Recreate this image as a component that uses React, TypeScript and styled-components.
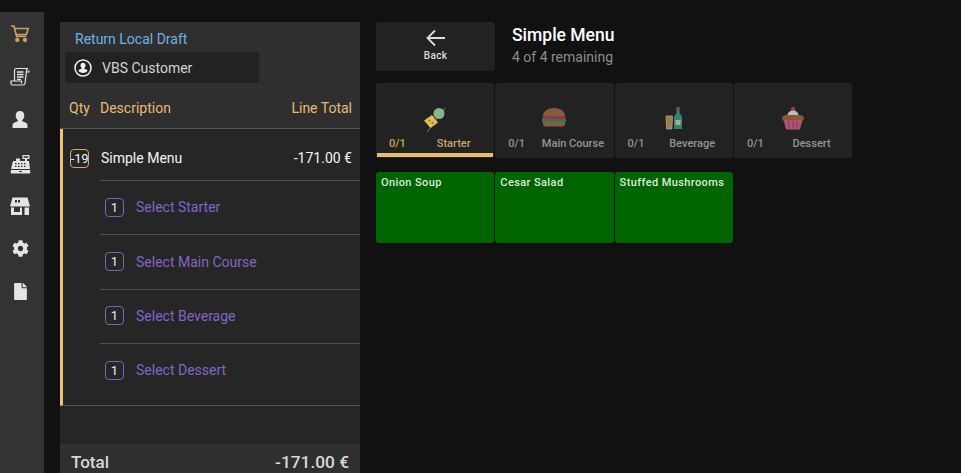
import React from "react";
import styled, { createGlobalStyle } from "styled-components";
import { FaCog, FaFile } from "react-icons/fa";

const GlobalStyle = createGlobalStyle`
  html, body {
    margin: 0;
    padding: 0;
    height: 473px;
    overflow: hidden;
    background: #111112;
    font-family: Roboto, "Liberation Sans", sans-serif;
  }
  * { box-sizing: border-box; }
`;

const Page = styled.div`
  display: flex;
  height: 473px;
  overflow: hidden;
`;

const Sidebar = styled.nav`
  width: 44px;
  margin-top: 12px;
  padding-top: 12px;
  background: #333333;
  display: flex;
  flex-direction: column;
  align-items: center;
  flex-shrink: 0;
`;

const NavItem = styled.div<{ $active?: boolean }>`
  width: 44px;
  height: 43.2px;
  flex-shrink: 0;
  display: flex;
  justify-content: center;
  padding-right: 4px;
  color: ${(p) => (p.$active ? "#c9a162" : "#e4e4e4")};
`;

const OrderPanel = styled.section`
  width: 300px;
  margin: 22px 0 0 16px;
  flex-shrink: 0;
  display: flex;
  flex-direction: column;
  & > * {
    flex-shrink: 0;
  }
`;

const PanelHead = styled.div`
  background: #2f2f2f;
  height: 66px;
  padding: 9px 0 0 5px;
`;

const DraftLink = styled.div`
  color: #6fb1e8;
  font-size: 14px;
  line-height: 16px;
  padding-left: 10px;
`;

const Customer = styled.div`
  width: 194px;
  height: 31px;
  margin-top: 5px;
  padding-left: 9px;
  display: flex;
  align-items: center;
  gap: 10px;
  background: #222222;
  border-radius: 3px;
  color: #d4d4d4;
  font-size: 14px;
`;

const ColumnHead = styled.div`
  height: 41px;
  padding: 0 8px 0 9px;
  display: flex;
  align-items: center;
  background: #2f2f2f;
  border-bottom: 1px solid #555555;
  color: #e8bb77;
  font-size: 14px;
`;

const QtyHead = styled.span`
  width: 31px;
`;

const DescHead = styled.span`
  flex: 1;
`;

const Lines = styled.div`
  background: #262627;
  border-left: 3px solid #f5c170;
  border-bottom: 1px solid #555555;
  padding-bottom: 7px;
`;

const MainLine = styled.div`
  height: 51px;
  padding: 7px 8px 0 7px;
  display: flex;
  align-items: center;
  color: #f4f4f4;
  font-size: 14px;
`;

const QtyBadge = styled.span`
  width: 19px;
  height: 19px;
  margin-right: 12px;
  border: 1px solid #d2a865;
  border-radius: 4px;
  display: flex;
  align-items: center;
  justify-content: center;
  color: #f0f0f0;
  font-size: 13px;
  letter-spacing: -0.3px;
  overflow: hidden;
  white-space: nowrap;
`;

const LineName = styled.span`
  flex: 1;
`;

const SubLine = styled.div`
  margin-left: 37px;
  height: 54.4px;
  padding: 0 0 1px 5px;
  display: flex;
  align-items: center;
  border-top: 1px solid #4f4f4f;
  color: #8465c4;
  font-size: 14px;
`;

const SubBadge = styled.span`
  width: 19px;
  height: 19px;
  margin-right: 12px;
  border: 1px solid #7b63ad;
  border-radius: 4px;
  display: flex;
  align-items: center;
  justify-content: center;
  color: #ececec;
  font-size: 13px;
`;

const Spacer = styled.div`
  height: 38px;
  background: #262627;
`;

const TotalRow = styled.div`
  height: 40px;
  padding: 8px 11px 0 11px;
  display: flex;
  justify-content: space-between;
  background: #2f2f2f;
  color: #d8d8d8;
  font-size: 17px;
  font-weight: 500;
  line-height: 20px;
  & > span:last-child {
    font-size: 17.3px;
  }
`;

const Content = styled.main`
  flex: 1;
  padding: 22px 0 0 16px;
`;

const TopBar = styled.header`
  display: flex;
  gap: 17px;
`;

const BackButton = styled.div`
  width: 119px;
  height: 49px;
  padding-top: 6px;
  display: flex;
  flex-direction: column;
  align-items: center;
  background: #222222;
  border-radius: 3px;
  color: #dcdcdc;
  font-size: 10px;
  font-weight: 500;
  letter-spacing: 0.3px;
  line-height: 12px;
  & > svg {
    margin-bottom: 2px;
  }
`;

const TitleBlock = styled.div`
  padding-top: 4px;
`;

const Title = styled.div`
  color: #ffffff;
  font-size: 17.5px;
  font-weight: 500;
  line-height: 19px;
`;

const Remaining = styled.div`
  margin-top: 4px;
  color: #8c8c8c;
  font-size: 14px;
  line-height: 17px;
`;

const TabRow = styled.div`
  display: grid;
  grid-template-columns: repeat(4, 118.3px);
  column-gap: 1px;
  margin-top: 12px;
`;

const Tab = styled.div<{ $active?: boolean }>`
  height: 75px;
  padding: 22px 0 0;
  position: relative;
  display: flex;
  flex-direction: column;
  align-items: center;
  background: #222222;
  border-radius: 3px;
  color: ${(p) => (p.$active ? "#c9a566" : "#949494")};
  font-size: 11px;
  font-weight: 500;
  &::after {
    content: "";
    display: ${(p) => (p.$active ? "block" : "none")};
    position: absolute;
    left: 1px;
    right: 1px;
    bottom: 1px;
    height: 4px;
    background: #e6bb78;
  }
`;

const TabIcon = styled.svg<{ $dim?: boolean }>`
  width: 28px;
  height: 28px;
  opacity: ${(p) => (p.$dim ? 0.75 : 1)};
`;

const TabFoot = styled.div`
  width: 100%;
  margin-top: 4px;
  padding: 0 0 0 13px;
  display: flex;
  line-height: 13px;
`;

const TabCount = styled.span`
  width: 24px;
`;

const TabName = styled.span`
  flex: 1;
  text-align: center;
`;

const CardGrid = styled.div`
  display: grid;
  grid-template-columns: repeat(3, 118.3px);
  column-gap: 1px;
  margin-top: 14px;
`;

const Card = styled.div`
  height: 71px;
  padding: 4px 5px;
  background: #006400;
  border-radius: 3px;
  color: #dfeadf;
  font-size: 11px;
  font-weight: 500;
  letter-spacing: 0.4px;
  line-height: 13px;
`;

const Cart = () => (
  <svg width="20" height="20" viewBox="0 0 20 20" fill="none" stroke="currentColor" strokeWidth="1.7">
    <path d="M1 2h3l2.6 10.5h9.6" />
    <path d="M4.6 4.5h13.6l-2 6.2H6.1" />
    <circle cx="7.3" cy="16" r="1.3" fill="currentColor" />
    <circle cx="15" cy="16" r="1.3" fill="currentColor" />
  </svg>
);

const Receipt = () => (
  <svg width="20" height="20" viewBox="0 0 20 20" fill="none" stroke="currentColor" strokeWidth="1.2">
    <path d="M4.500 14V3.500C4.500 2.300 5.300 1.500 6.500 1.500H18c-1 .3-1.500 1.200-1.500 2.200V5h2.500V3.500M16.500 4L15 16.500c-.2 1-1 1.500-2 1.500H2.500c-1 0-1.500-.7-1.500-1.500V14h10.500v2.500" />
    <path d="M7 5h6.500M7 7.500h6.500M7 10h6.500M7 12.300h4" strokeWidth="1.300" />
  </svg>
);

const Person = () => (
  <svg width="20" height="20" viewBox="0 0 20 20" fill="currentColor">
    <path d="M10 1c2.700 0 4.300 2 4.300 4.500 0 2-.9 3.700-2.100 4.600v1.200c2.800.8 5.300 1.900 5.300 3.700V18h-15v-3c0-1.800 2.500-2.900 5.300-3.700v-1.200C6.600 9.200 5.700 7.500 5.700 5.500 5.700 3 7.300 1 10 1z" />
  </svg>
);

const Register = () => (
  <svg width="21" height="21" viewBox="0 0 21 21" fill="currentColor">
    <path d="M12.500 1h7v4h-2.500v2h-2v-2h-2.500zM13.700 2.200v1.600h4.600V2.200z" fillRule="evenodd" />
    <path fillRule="evenodd" d="M3 7h3V4.500h4V7h9l1 8H1zM5 9v1.300h1.500V9zM8 9v1.300h1.500V9zM11 9v1.300h1.500V9zM14 9v1.300h1.500V9zM5 11.700V13h1.500v-1.300zM8 11.700V13h1.500v-1.300zM11 11.700V13h1.500v-1.300zM14 11.700V13h1.500v-1.300z" />
    <path fillRule="evenodd" d="M.8 16h19.400v3.500H.8zM9 17v1h3v-1z" />
  </svg>
);

const Store = () => (
  <svg width="20" height="19" viewBox="0 0 20 19" fill="currentColor">
    <path fillRule="evenodd" d="M2.500.5h15L20 9.500H0zM5 3v2.500h2V3zM8 3v2.500h2V3z" />
    <path d="M1 10.500h3V15h6v-4.500h2V18H1zM14.500 10.500H19V18h-4.500z" />
  </svg>
);

const UserCircle = () => (
  <svg width="18" height="18" viewBox="0 0 18 18">
    <circle cx="9" cy="9" r="8" fill="none" stroke="#f2f2f2" strokeWidth="1.500" />
    <path fill="#f2f2f2" d="M9 3.800c1.600 0 2.500 1.100 2.500 2.600 0 1.100-.5 2-1.200 2.500v.9c1.500.4 2.900 1 3.300 2-.9 1.300-2.600 2.200-4.600 2.200s-3.700-.9-4.600-2.200c.4-1 1.800-1.600 3.300-2v-.9c-.7-.5-1.200-1.400-1.200-2.500 0-1.500.9-2.600 2.500-2.600z" />
  </svg>
);

const BackArrow = () => (
  <svg width="22" height="20" viewBox="0 0 22 20" fill="none" stroke="#dcdcdc" strokeWidth="1.800">
    <path d="M20 10H3M10 2.500L2.500 10l7.500 7.500" />
  </svg>
);

const Skewer = () => (
  <TabIcon viewBox="0 0 28 28">
    <path d="M6 27L24 3" stroke="#8a7a50" strokeWidth="1" />
    <circle cx="18" cy="8.500" r="5.500" fill="#8ab58a" />
    <path d="M3 15.500L11 10l6 7.500L9.500 23z" fill="#dcc058" />
    <circle cx="8.500" cy="15.500" r="1" fill="#7a6a28" />
    <circle cx="11.500" cy="18" r="1" fill="#7a6a28" />
  </TabIcon>
);

const Burger = () => (
  <TabIcon $dim viewBox="0 0 28 28">
    <path d="M3 11c0-5 5-8 11-8s11 3 11 8z" fill="#a5714a" />
    <path d="M2.500 11h23v3h-23z" fill="#b5404a" />
    <path d="M2 14h24v3H2z" fill="#4d8a60" />
    <path d="M3 17h22v2c0 1.500-1 2.500-2.500 2.500h-17C4 21.500 3 20.500 3 19z" fill="#a5714a" />
  </TabIcon>
);

const Drinks = () => (
  <TabIcon $dim viewBox="0 0 28 28">
    <path d="M6 11h6.500l-.6 13H6.600z" fill="#c79a66" stroke="#e0c9a5" strokeWidth=".8" />
    <path d="M16.500 2h3v6l2.500 3.500V24h-8V11.500L16.500 8z" fill="#3fa586" />
    <path d="M16.500 2h3v3h-3z" fill="#b5485f" />
    <path d="M15.500 15h5v5h-5z" fill="#d8d8c8" />
  </TabIcon>
);

const Cupcake = () => (
  <TabIcon $dim viewBox="0 0 28 28">
    <circle cx="14" cy="4" r="2.200" fill="#c2405f" />
    <path d="M8.500 10.500c0-3 2.500-5 5.500-5s5.500 2 5.500 5z" fill="#eeeeee" />
    <path d="M3 13.500c0-2 2-3.500 4-3.500h14c2 0 4 1.500 4 3.500l-1 2H4z" fill="#a86a40" />
    <path d="M4.500 15h19l-2.500 9.500H7z" fill="#d9668c" />
    <path d="M9.500 16l1 8M14 16v8M18.500 16l-1 8" stroke="#a84468" strokeWidth="1" />
  </TabIcon>
);

const courses = [
  { name: "Starter", icon: <Skewer />, active: true },
  { name: "Main Course", icon: <Burger />, active: false },
  { name: "Beverage", icon: <Drinks />, active: false },
  { name: "Dessert", icon: <Cupcake />, active: false },
];

const items = ["Onion Soup", "Cesar Salad", "Stuffed Mushrooms"];

export default function App() {
  return (
    <Page>
      <GlobalStyle />
      <Sidebar>
        <NavItem $active><Cart /></NavItem>
        <NavItem><Receipt /></NavItem>
        <NavItem><Person /></NavItem>
        <NavItem><Register /></NavItem>
        <NavItem><Store /></NavItem>
        <NavItem><FaCog size={17} /></NavItem>
        <NavItem><FaFile size={17} /></NavItem>
      </Sidebar>
      <OrderPanel>
        <PanelHead>
          <DraftLink>Return Local Draft</DraftLink>
          <Customer>
            <UserCircle />
            VBS Customer
          </Customer>
        </PanelHead>
        <ColumnHead>
          <QtyHead>Qty</QtyHead>
          <DescHead>Description</DescHead>
          <span>Line Total</span>
        </ColumnHead>
        <Lines>
          <MainLine>
            <QtyBadge>-19</QtyBadge>
            <LineName>Simple Menu</LineName>
            <span>-171.00 €</span>
          </MainLine>
          {courses.map((c) => (
            <SubLine key={c.name}>
              <SubBadge>1</SubBadge>
              Select {c.name}
            </SubLine>
          ))}
        </Lines>
        <Spacer />
        <TotalRow>
          <span>Total</span>
          <span>-171.00 €</span>
        </TotalRow>
      </OrderPanel>
      <Content>
        <TopBar>
          <BackButton>
            <BackArrow />
            Back
          </BackButton>
          <TitleBlock>
            <Title>Simple Menu</Title>
            <Remaining>4 of 4 remaining</Remaining>
          </TitleBlock>
        </TopBar>
        <TabRow>
          {courses.map((c) => (
            <Tab key={c.name} $active={c.active}>
              {c.icon}
              <TabFoot>
                <TabCount>0/1</TabCount>
                <TabName>{c.name}</TabName>
              </TabFoot>
            </Tab>
          ))}
        </TabRow>
        <CardGrid>
          {items.map((name) => (
            <Card key={name}>{name}</Card>
          ))}
        </CardGrid>
      </Content>
    </Page>
  );
}
